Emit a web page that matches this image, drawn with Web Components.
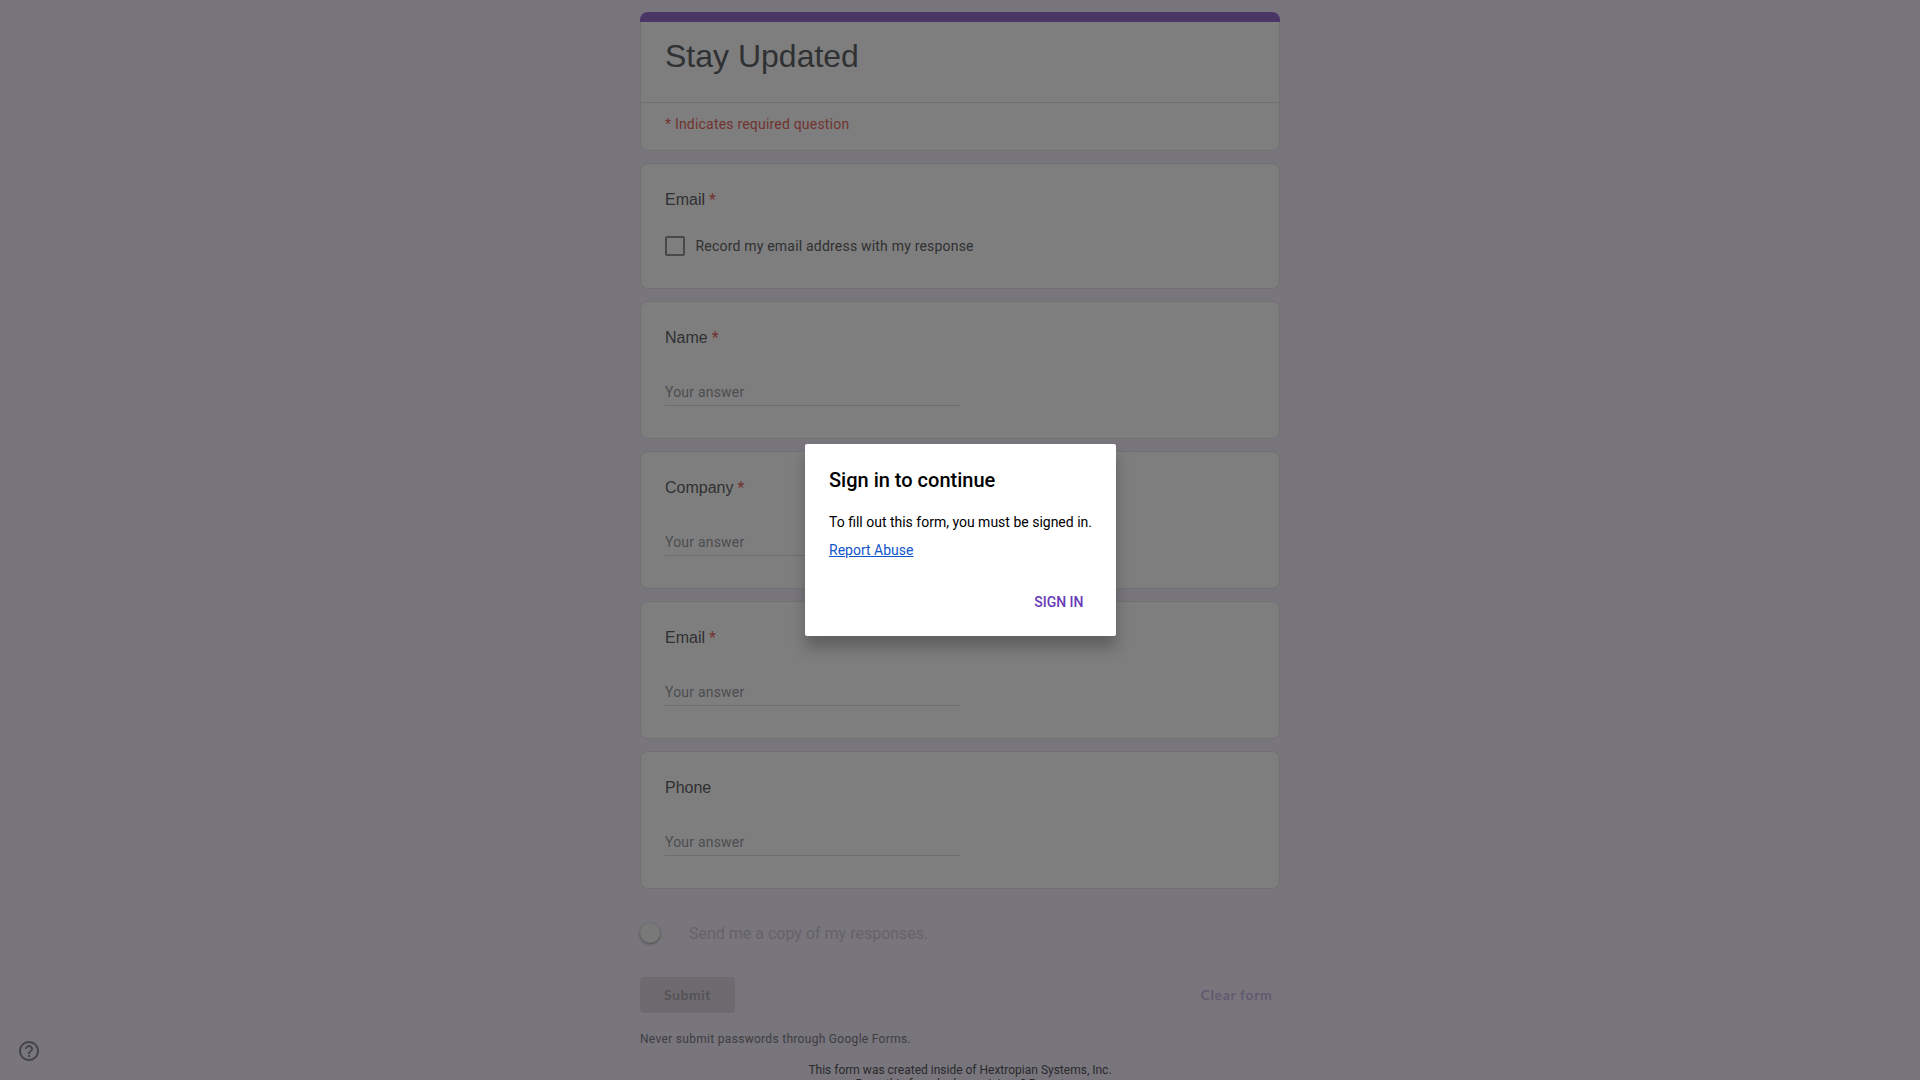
<!DOCTYPE html>
<html lang="en"><head><meta charset="utf-8"><title>Stay Updated</title>
<style>
html,body{margin:0;height:1080px;overflow:hidden;background:#f0ebf8;font-family:Roboto,"Liberation Sans",sans-serif}
</style></head><body>
<form-page></form-page>
<script>
const define=(name,html)=>customElements.define(name,class extends HTMLElement{
  constructor(){super();const t=document.createElement('template');t.innerHTML=html;
    this.attachShadow({mode:'open'}).append(t.content.cloneNode(true));}
});
define('form-header',`<style>
:host{display:block;box-sizing:border-box;height:139px;border:1px solid #e2e2e6;border-top:0;border-radius:8px;background:#fdfdfe}
.bar{height:10px;margin:0 -1px;background:#926cce;border-radius:8px 8px 0 0}
h1{box-sizing:border-box;margin:0;height:80px;padding:14px 24px 0;font:400 32px/40px "Liberation Sans",sans-serif;color:#616265}
.req{border-top:1px solid #e2e2e6;padding:11px 24px 0;font-size:14px;line-height:20px;letter-spacing:.2px;color:#e2685f}
</style><div class="bar"></div><h1><slot></slot></h1><div class="req">* Indicates required question</div>`);
define('text-answer',`<style>
:host{display:block;width:295px;box-sizing:border-box;border-bottom:1px solid #dddde0;height:33px;padding-top:9px;font-size:14px;line-height:20px;letter-spacing:.2px;color:#999ca0}
</style>Your answer`);
define('check-option',`<style>
:host{display:flex;align-items:center;gap:10.500px;height:20px;margin-top:1px;font-size:14px;line-height:20px;letter-spacing:.2px;color:#616265}
i{box-sizing:border-box;width:20px;height:20px;border:2px solid #8d9094;border-radius:2px}
</style><i></i><span><slot></slot></span>`);
define('question-card',`<style>
:host{display:block;box-sizing:border-box;height:138px;border:1px solid #e2e2e6;border-radius:8px;background:#fdfdfe;padding:24px 24px 0}
:host([short]){height:126px}
.t{font:400 16px/24px "Liberation Sans",sans-serif;color:#616265;height:24px;white-space:pre}
b{display:none;font-weight:400;font-family:Roboto,sans-serif;padding-left:4px;color:#e2685f}
:host([required]) b{display:inline}
.a{display:flow-root;padding-top:23px}
</style><div class="t"><slot name="title"></slot><b>*</b></div><div class="a"><slot></slot></div>`);
define('copy-toggle',`<style>
:host{display:flex;align-items:center;height:24px;gap:13px;font-size:16px;line-height:24px;color:#cbc6d1}
.track{width:36px;height:14px;border-radius:7px;background:#eeebf4;display:flex;align-items:center}
.thumb{width:20px;height:20px;border-radius:50%;background:#f3f3f3;box-shadow:0 1px 3px rgba(0,0,0,.4);flex:none}
span{padding-top:2px}
</style><div class="track"><div class="thumb"></div></div><span><slot></slot></span>`);
define('form-actions',`<style>
:host{display:flex;justify-content:space-between;align-items:center;height:36px;font:700 14px/20px Lato,sans-serif;letter-spacing:.5px}
.s{width:95px;line-height:36px;text-align:center;background:#dad6e0;border-radius:4px;color:#aaa6ae}
.c{padding-right:7.500px;letter-spacing:.65px;color:#c4b5e0}
</style><div class="s">Submit</div><div class="c">Clear form</div>`);
define('help-button',`<style>:host{display:block;position:absolute;left:17px;top:1039px;width:24px;height:24px;opacity:.7}svg{display:block}</style>
<svg width="24" height="24" viewBox="0 0 24 24" fill="#5f6368"><path d="M11 18h2v-2h-2v2zm1-16C6.48 2 2 6.48 2 12s4.48 10 10 10 10-4.480 10-10S17.520 2 12 2zm0 18c-4.410 0-8-3.590-8-8s3.590-8 8-8 8 3.590 8 8-3.590 8-8 8zm0-14c-2.210 0-4 1.790-4 4h2c0-1.100.9-2 2-2s2 .9 2 2c0 2-3 1.750-3 5h2c0-2.250 3-2.500 3-5 0-2.210-1.790-4-4-4z"/></svg>`);
define('signin-dialog',`<style>
:host{display:block;box-sizing:border-box;width:311px;height:192px;background:#fff;border-radius:2px;padding:24px;box-shadow:0 12px 15px 0 rgba(0,0,0,.24);color:#000;white-space:nowrap}
h2{margin:0;font-weight:500;font-size:20px;line-height:24px}
p{margin:18px 0 0;font-size:14px;line-height:24px}
a{display:block;margin-top:4px;font-size:14px;line-height:24px;color:#1155cc;text-decoration:underline}
.b{margin-top:28px;padding-right:8.500px;text-align:right;font-weight:500;font-size:14px;line-height:24px;color:#673ab7}
</style><h2>Sign in to continue</h2><p>To fill out this form, you must be signed in.</p><a>Report Abuse</a><div class="b">SIGN IN</div>`);
define('modal-overlay',`<style>
:host{position:absolute;inset:0;background:rgba(0,0,0,.5);display:flex;align-items:center;justify-content:center}
</style><slot></slot>`);
define('form-page',`<style>
:host{display:block;position:relative;height:1080px;overflow:hidden;background:#f0ebf8}
main{width:640px;margin:0 auto;padding-top:12px;display:flex;flex-direction:column;gap:12px}
copy-toggle{margin-top:20px}
form-actions{margin-top:20px}
.never{margin-top:4px;font-size:12px;line-height:20px;letter-spacing:.3px;color:#5f6368;opacity:.8}
.foot{font-size:12px;line-height:14px;text-align:center;color:#202124;margin-top:2px;opacity:.75}
signin-dialog{margin-left:1px}
</style><main>
<form-header>Stay Updated</form-header>
<question-card short required><span slot="title">Email</span><check-option>Record my email address with my response</check-option></question-card>
<question-card required><span slot="title">Name</span><text-answer></text-answer></question-card>
<question-card required><span slot="title">Company</span><text-answer></text-answer></question-card>
<question-card required><span slot="title">Email</span><text-answer></text-answer></question-card>
<question-card><span slot="title">Phone</span><text-answer></text-answer></question-card>
<copy-toggle>Send me a copy of my responses.</copy-toggle>
<form-actions></form-actions>
<div class="never">Never submit passwords through Google Forms.</div>
<div class="foot">This form was created inside of Hextropian Systems, Inc.<br>Does this form look suspicious? Report</div>
</main><help-button></help-button><modal-overlay><signin-dialog></signin-dialog></modal-overlay>`);
</script></body></html>
